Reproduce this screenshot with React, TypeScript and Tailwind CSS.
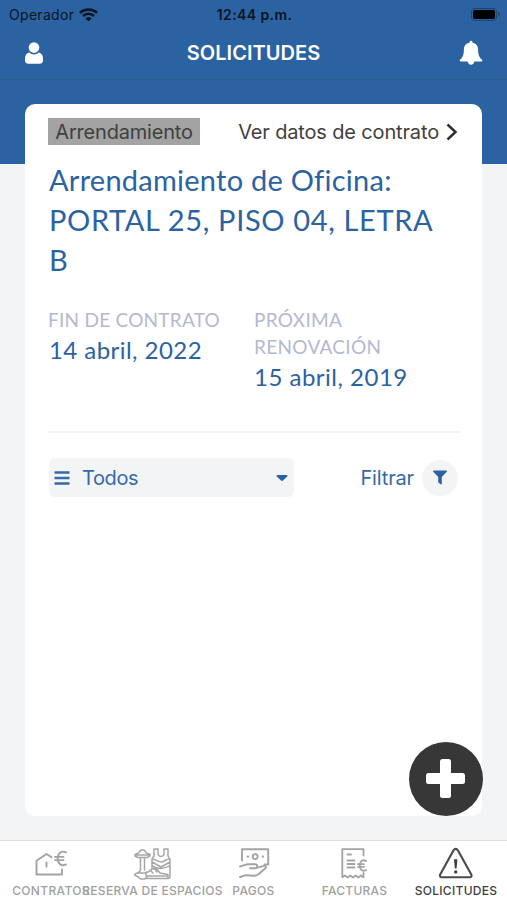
import React from "react";

function UserIcon() {
  return (
    <svg className="block h-6 w-5" viewBox="0 0 20 24" fill="#fff">
      <circle cx="10" cy="6.6" r="5.3" />
      <path d="M5.2 11.6C2.6 12 1 14.2 1 17.6v1.9c0 2 1.2 3.2 3.2 3.2h11.6c2 0 3.2-1.2 3.2-3.2v-1.9c0-3.4-1.6-5.6-4.2-6-1.3 1.200-3 1.900-4.800 1.900s-3.500-.700-4.800-1.900z" />
    </svg>
  );
}

function BellIcon() {
  return (
    <svg className="block h-[26px] w-6" viewBox="0 0 24 26" fill="#fff">
      <path d="M12 .8c.8 0 1.400.6 1.400 1.400v.5c3.700.6 5.700 3.200 5.700 6.700 0 5.200 1.100 8.300 3.900 10.400.5.4.4 1.700-.4 1.700h-7.300c-.2 2-1.500 3.200-3.300 3.200s-3.100-1.200-3.300-3.200H1.400c-.8 0-.9-1.300-.4-1.700 2.800-2.100 3.900-5.200 3.900-10.400 0-3.500 2-6.100 5.700-6.700v-.5c0-.8.600-1.400 1.400-1.400z" />
    </svg>
  );
}

function WifiIcon() {
  return (
    <svg className="block h-[14px] w-[19px]" viewBox="0 0 19 14" fill="none" stroke="#0b1420" strokeWidth="2.600">
      <path d="M1 4.900a12.300 12.300 0 0 1 17 0" />
      <path d="M4 8a8 8 0 0 1 11 0" />
      <path d="M9.500 13.600 6.500 10.500a4.400 4.400 0 0 1 6 0z" fill="#0b1420" stroke="none" />
    </svg>
  );
}

function HouseEuroIcon() {
  return (
    <svg className="block h-[34px] w-10" viewBox="0 0 40 34" fill="none" stroke="#a3a3a3" strokeWidth="1.900" strokeLinecap="round" strokeLinejoin="round">
      <path d="M20.500 11.300 15.500 8 5.500 14.800V28.500H31V23.500" />
      <path d="M15.500 16.500v4" />
      <path d="M35 6.400c-4.800-2.300-8.300 1-8.300 6s3.500 8.300 8.300 6M24 10.900h8.500M24 14.100h8.500" />
    </svg>
  );
}

function GymIcon() {
  return (
    <svg className="block h-[34px] w-10" viewBox="0 0 40 34" fill="none" stroke="#a6a6a6" strokeWidth="1.500" strokeLinejoin="round" strokeLinecap="round">
      <path d="M2 10v-1.500l3.500-1.500L8 4h3l2.500 3 3.500 1.500V10l-3 1.500H5zM2.500 9h14M7.500 12v12M11.500 12v12M7.500 24l-2 2.500L2 28v1.500l3.500 1.500 2 2h4l2.500-2M5.500 27h8" />
      <path d="M21 3v7l-2 3v10M25 3v4c0 4.500 6 4.500 6 0V3M35 3v7l2 3.500v17c0 1-1 2-2 2H12M21 3h4M31 3h4M19 13c4 0 6 3 9 3s5-3 8-3M19 16l9 5 9-5M19 19.500c5 4 12 4 18 0" />
      <path d="M13 26c3 1 4-1 6-3l4-1 4 5 8 1.500v3.500M13 26v4h22M17 24l3 3M21 22l3 4" />
    </svg>
  );
}

function CashHandIcon() {
  return (
    <svg className="block h-[34px] w-10" viewBox="0 0 40 34" fill="none" stroke="#a3a3a3" strokeWidth="1.900" strokeLinejoin="round" strokeLinecap="round">
      <path d="M8 14.500V3.200H34.200V18.500h-3.700" />
      <circle cx="21.200" cy="10.600" r="2.500" />
      <path d="M13.800 10.600h.1M28.800 10.600h.1" strokeWidth="2.400" />
      <path d="M6 20.500c3-.6 5.500-2.200 8.500-2.200h6.500c2.900 0 2.900 4 0 4h-5M22.500 21.800l6.500-1.700c3-.7 3.800 1.200 1.800 2.700l-6 5.200c-1.700 1.300-3 1.800-5 1.700L12 29.200l-6 1.800" />
    </svg>
  );
}

function InvoiceIcon() {
  return (
    <svg className="block h-[34px] w-10" viewBox="0 0 40 34" fill="none" stroke="#a3a3a3" strokeWidth="1.800" strokeLinejoin="round" strokeLinecap="round">
      <path d="M28.500 9.500V3.200H7.300v28l2.700-1.700 2.700 1.900 2.600-1.900 2.700 1.900 2.600-1.900 2.700 1.900 2.600-1.900 2.600 1.900V27" />
      <path d="M12.500 8.500h3.500M12.500 14.500h7M12.500 18h7M12.500 21.500h7" />
      <path d="M31.200 15c-3.800-2-6.400.5-6.400 4.500s2.600 6.500 6.400 4.500M23 18.200h6M23 20.900h6" />
    </svg>
  );
}

function WarningIcon() {
  return (
    <svg className="block h-[34px] w-10" viewBox="0 0 40 34" fill="none" stroke="#4a4a4a" strokeWidth="2.100" strokeLinejoin="round">
      <path d="M17.700 4.100c1-1.700 3-1.700 4 0l13.600 24.500c.8 1.500 0 2.600-1.600 2.600H5.800c-1.600 0-2.400-1.100-1.600-2.600z" />
      <path d="M18 13.200h3.400l-.8 9.300h-1.800z" fill="#3f3f3f" stroke="none" />
      <circle cx="19.700" cy="25.900" r="1.700" fill="#3f3f3f" stroke="none" />
    </svg>
  );
}

const tabs = [
  { label: "CONTRATOS", icon: <HouseEuroIcon />, style: "tracking-[0.35px] text-[#a0a0a0]" },
  { label: "RESERVA DE ESPACIOS", icon: <GymIcon />, style: "tracking-[0.3px] text-[#a0a0a0]" },
  { label: "PAGOS", icon: <CashHandIcon />, style: "tracking-[0.3px] text-[#a0a0a0]" },
  { label: "FACTURAS", icon: <InvoiceIcon />, style: "tracking-[0.25px] text-[#a0a0a0]" },
  { label: "SOLICITUDES", icon: <WarningIcon />, style: "tracking-[0.3px] text-[#3f3f3f]" },
];

export default function App() {
  return (
    <div className="relative flex h-[900px] w-full flex-col overflow-hidden bg-[#f2f4f6] font-['Inter',sans-serif]">
      <header className="h-20 shrink-0 border-b border-[#295a94] bg-[#2b62a2]">
        <div className="grid h-7 grid-cols-3 items-center pr-[7px] pl-[9px] text-[14px] text-[#0b1420]">
          <div className="flex items-center gap-[5px] pt-px">
            <span className="tracking-[0.3px]">Operador</span>
            <WifiIcon />
          </div>
          <span className="text-center font-semibold tracking-[0.4px] whitespace-nowrap">12:44 p.m.</span>
          <div className="flex items-center justify-end gap-px">
            <div className="h-[13px] w-[26px] rounded-[4px] border border-[#1e4470] p-px">
              <div className="h-full rounded-[2px] bg-black" />
            </div>
            <div className="h-1 w-[2px] rounded-r bg-[#1e4470]" />
          </div>
        </div>
        <div className="grid h-[50px] grid-cols-[1fr_auto_1fr] items-center px-6">
          <UserIcon />
          <h1 className="text-[20px] leading-6 font-semibold tracking-[0.050px] text-white">SOLICITUDES</h1>
          <div className="flex justify-end">
            <BellIcon />
          </div>
        </div>
      </header>

      <main className="h-[760px] shrink-0 bg-[linear-gradient(#2b62a2_84.500px,#f2f4f6_84.500px)] px-[25px] pt-6">
        <section className="h-[712px] rounded-[10px] bg-white px-6 pt-[14px]">
          <div className="-ml-px flex h-[27px] items-center justify-between text-[20px] text-[#404040]">
            <span className="flex h-[27px] w-[152px] items-center justify-center bg-[#a3a3a3] tracking-[-0.2px] whitespace-nowrap">Arrendamiento</span>
            <span className="flex items-center gap-[7px] tracking-[-0.15px] whitespace-nowrap">
              Ver datos de contrato
              <svg className="h-[18px] w-3" viewBox="0 0 12 18" fill="none" stroke="#303030" strokeWidth="2.500">
                <path d="m1.500 1.500 8 7.500-8 7.500" />
              </svg>
            </span>
          </div>

          <h2 className="mt-[15px] font-['Lato',sans-serif] text-[29px] leading-10 whitespace-nowrap text-[#2b62a2]">
            <span className="block tracking-[0.25px]">Arrendamiento de Oficina:</span>
            <span className="block tracking-[0.65px]">PORTAL 25, PISO 04, LETRA</span>
            <span className="block">B</span>
          </h2>

          <div className="mt-[26px] -mr-[3px] -ml-px grid h-[127px] grid-cols-[205px_1fr] border-b-2 border-[#f3f4f5] font-['Lato',sans-serif] text-[#2b62a2]">
            <div>
              <div className="text-[19px] leading-[27px] tracking-[0.25px] text-[#b4b8d4]">FIN DE CONTRATO</div>
              <div className="pl-px text-[24px] leading-[34px] tracking-[0.45px]">14 abril, 2022</div>
            </div>
            <div>
              <div className="pl-px text-[19px] leading-[27px] tracking-[0.3px] text-[#b4b8d4]">PRÓXIMA<br />RENOVACIÓN</div>
              <div className="pl-px text-[24px] leading-[34px] tracking-[0.5px]">15 abril, 2019</div>
            </div>
          </div>

          <div className="mt-[25px] flex h-[39px] items-center justify-between text-[20px] text-[#356aa8]">
            <div className="flex h-full w-[245px] items-center rounded-[6px] bg-[#f2f4f6] pr-[6px] pl-[5px]">
              <svg className="h-[14px] w-4" viewBox="0 0 16 14" fill="none" stroke="currentColor" strokeWidth="2.500">
                <path d="M.5 1.500h15M.5 7h15M.5 12.500h15" />
              </svg>
              <span className="ml-3 flex-1 tracking-[-0.4px]">Todos</span>
              <svg className="h-[6px] w-3" viewBox="0 0 12 6" fill="#2b62a2">
                <path d="M1.500 0h9c1 0 1.300.9.700 1.500L7 5.500c-.6.600-1.400.6-2 0L.8 1.500C.200.900.500 0 1.500 0z" />
              </svg>
            </div>
            <div className="flex items-center gap-2">
              <span className="tracking-[-0.15px]">Filtrar</span>
              <span className="flex size-9 items-center justify-center rounded-full bg-[#f2f4f6]">
                <svg className="h-[15px] w-[14px]" viewBox="0 0 14 15" fill="#2b62a2">
                  <path d="M.7.500h12.600c.7 0 .9.700.4 1.200L8.800 7v6.800c0 .6-.6.900-1.100.5l-2-1.600c-.3-.2-.5-.5-.5-.9V7L.3 1.700C-.200 1.200 0 .5.700.5z" />
                </svg>
              </span>
            </div>
          </div>
        </section>
      </main>

      <button className="absolute top-[742px] left-[409px] flex size-[74px] items-center justify-center rounded-full bg-[#373737]">
        <svg className="size-10" viewBox="0 0 40 40" fill="#fff">
          <rect x="14" y="0" width="11" height="39" rx="2.500" />
          <rect x="0" y="14" width="39" height="11" rx="2.500" />
        </svg>
      </button>

      <nav className="grid h-[60px] shrink-0 grid-cols-[102px_101px_101px_101px_102px] border-t border-[#e0e0e0] bg-white">
        {tabs.map((tab) => (
          <div key={tab.label} className="flex min-w-0 flex-col items-center pt-[5px]">
            {tab.icon}
            <span className={`mt-1 text-[12px] leading-[14px] font-medium whitespace-nowrap ${tab.style}`}>{tab.label}</span>
          </div>
        ))}
      </nav>
    </div>
  );
}
